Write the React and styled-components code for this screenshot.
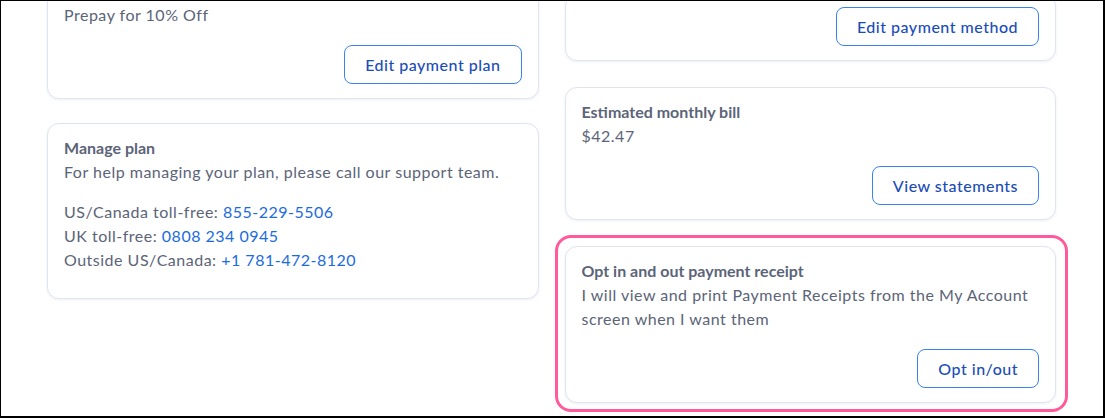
import { createGlobalStyle } from 'styled-components';
import styled from 'styled-components';

const GlobalStyle = createGlobalStyle`
  html, body {
    margin: 0;
    height: 100%;
    background: #000;
  }
  body {
    font-family: Lato, "Open Sans", Arial, sans-serif;
    color: #5b6478;
    overflow: hidden;
  }
  #root {
    height: 100%;
  }
`;

const Frame = styled.div`
  box-sizing: border-box;
  height: 418px;
  width: 1105px;
  border-style: solid;
  border-color: #000;
  border-width: 1px 2px 2px 1px;
  background: #fff;
  overflow: hidden;
`;

const Grid = styled.div`
  display: grid;
  grid-template-columns: 1fr 1fr;
  column-gap: 26px;
  align-items: start;
  padding: 0 47px 0 46px;
  margin-top: -11px;
`;

const Column = styled.div`
  display: flex;
  flex-direction: column;
  gap: ${(p) => p.$gap || 26}px;
  margin-top: ${(p) => p.$shift || 0}px;
`;

const Card = styled.section`
  position: relative;
  display: flex;
  flex-direction: column;
  padding: 12px 16px 14px;
  background: #fff;
  border: 1px solid #dfe5f0;
  border-radius: 12px;
  box-shadow: 0 1px 3px rgba(30, 50, 90, 0.08);
  font-size: 16px;
  line-height: 24px;
`;

const Highlight = styled.div`
  position: absolute;
  top: -12px;
  left: -11px;
  right: -13px;
  bottom: -10px;
  border: 3px solid #ff5b9c;
  border-radius: 16px;
  pointer-events: none;
`;

const Title = styled.h3`
  margin: 0;
  font-size: 16px;
  line-height: 24px;
  font-weight: 700;
  color: #5b6478;
`;

const Text = styled.p`
  margin: 0;
  color: #5b6478;
  letter-spacing: 0.5px;
`;

const Contacts = styled.div`
  margin: 16px 0 12px;
`;

const Phone = styled.a`
  color: #1a6be0;
  text-decoration: none;
`;

const Actions = styled.div`
  display: flex;
  justify-content: flex-end;
  margin-top: ${(p) => (p.$first ? 0 : 18)}px;
`;

const Button = styled.button`
  box-sizing: border-box;
  height: 39px;
  padding: 0 20px;
  background: #fff;
  border: 1px solid #3a82ec;
  border-radius: 8px;
  font-family: inherit;
  font-size: 16px;
  font-weight: 500;
  letter-spacing: 0.5px;
  color: #1a4db8;
  cursor: pointer;
`;

const contacts = [
  { label: 'US/Canada toll-free:', number: '855-229-5506' },
  { label: 'UK toll-free:', number: '0808 234 0945' },
  { label: 'Outside US/Canada:', number: '+1 781-472-8120' },
];

export default function App() {
  return (
    <>
      <GlobalStyle />
      <Frame>
        <Grid>
          {/* left column */}
          <Column $gap={24}>
            <Card>
              <Text>Prepay for 10% Off</Text>
              <Actions>
                <Button>Edit payment plan</Button>
              </Actions>
            </Card>

            <Card>
              <Title>Manage plan</Title>
              <Text>For help managing your plan, please call our support team.</Text>
              <Contacts>
                {contacts.map((c) => (
                  <Text key={c.number}>
                    {c.label} <Phone href="#">{c.number}</Phone>
                  </Text>
                ))}
              </Contacts>
            </Card>
          </Column>

          {/* right column */}
          <Column $shift={4}>
            <Card>
              <Actions $first>
                <Button>Edit payment method</Button>
              </Actions>
            </Card>

            <Card>
              <Title>Estimated monthly bill</Title>
              <Text>$42.47</Text>
              <Actions>
                <Button>View statements</Button>
              </Actions>
            </Card>

            <Card>
              <Highlight />
              <Title>Opt in and out payment receipt</Title>
              <Text>
                I will view and print Payment Receipts from the My Account screen when I want them
              </Text>
              <Actions>
                <Button>Opt in/out</Button>
              </Actions>
            </Card>
          </Column>
        </Grid>
      </Frame>
    </>
  );
}
